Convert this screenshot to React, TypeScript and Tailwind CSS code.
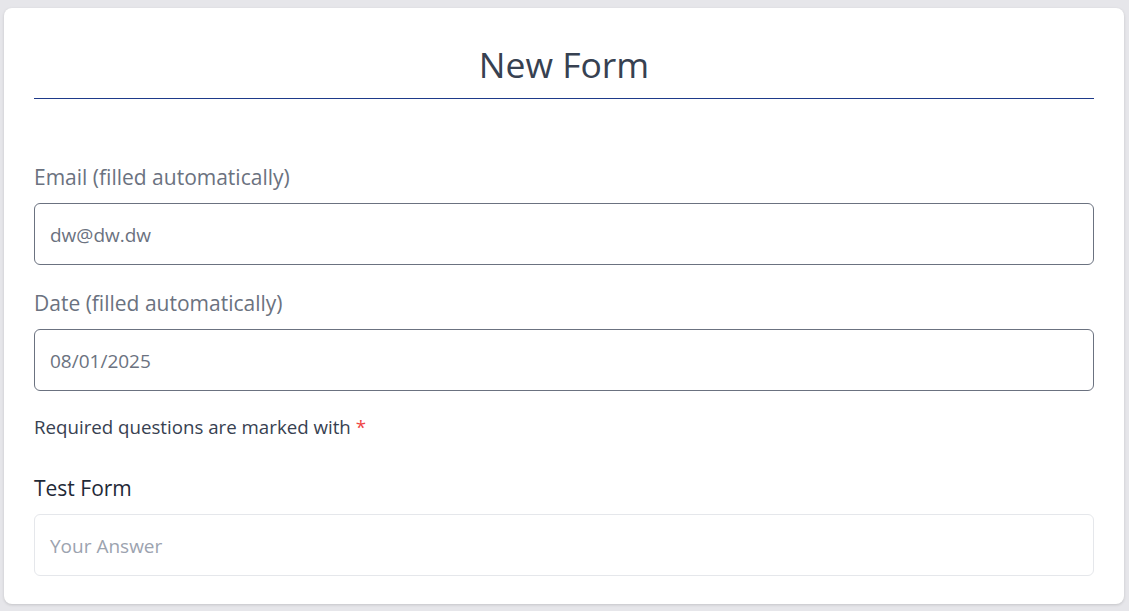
export default function App() {
  return (
    <div
      className="min-h-[611px] bg-[#e6e6ea] pt-2 pl-1 pr-[5px] pb-[7px]"
      style={{ fontFamily: '"Open Sans", "Noto Sans", sans-serif' }}
    >
      <div className="bg-white rounded-lg shadow-[0_1px_3px_rgba(0,0,0,0.15)] px-[30px] pt-[30px] pb-[28px]">
        <h1 className="text-center text-[35.5px] leading-[52px] text-[#374151]">New Form</h1>
        <div className="mt-[8px] h-px bg-[#1e3a8a]" />
        <div className="mt-[64px] flex flex-col">
          <label className="text-[21px] leading-[28px] text-[#6b7280]">Email (filled automatically)</label>
          <div className="mt-[12px] h-[62px] rounded-md border border-[#6b7280] px-[15px] pt-[3px] flex items-center text-[19px] text-[#6b7280]">
            dw@dw.dw
          </div>
          <label className="mt-[24px] text-[21px] leading-[28px] text-[#6b7280]">Date (filled automatically)</label>
          <div className="mt-[12px] h-[62px] rounded-md border border-[#6b7280] px-[15px] pt-[3px] flex items-center text-[19px] text-[#6b7280]">
            08/01/2025
          </div>
          <p className="mt-[24px] text-[18.7px] leading-[24px] text-[#374151]">
            Required questions are marked with <span className="text-[#ef4444]">*</span>
          </p>
          <label className="mt-[35px] text-[21px] leading-[28px] text-[#1f2937]">Test Form</label>
          <div className="mt-[12px] h-[62px] rounded-md border border-[#e5e7eb] px-[15px] pt-[3px] flex items-center text-[19px] text-[#9ca3af]">
            Your Answer
          </div>
        </div>
      </div>
    </div>
  );
}
